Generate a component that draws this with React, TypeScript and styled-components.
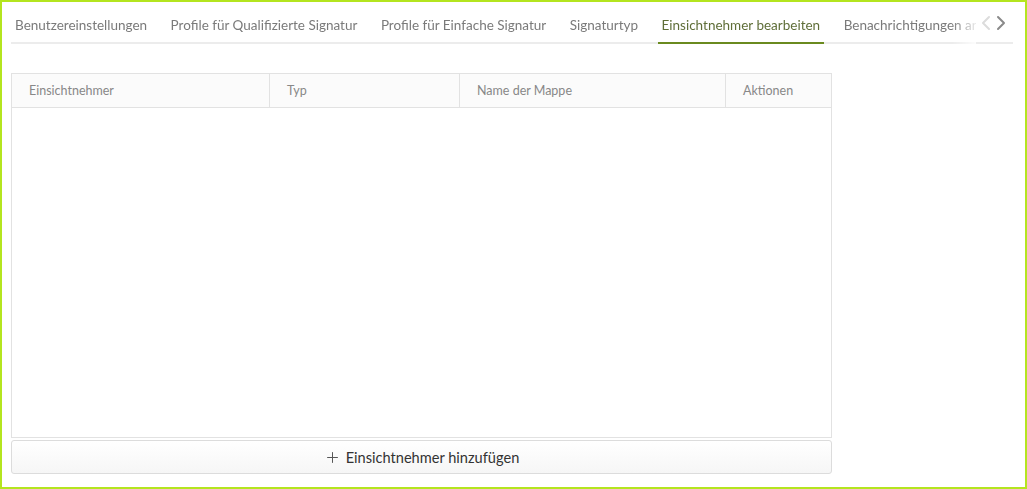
import React, { useState } from 'react';
import styled, { createGlobalStyle } from 'styled-components';
import { ChevronLeft, ChevronRight, Plus } from 'lucide-react';

const GlobalStyle = createGlobalStyle`
  html, body {
    margin: 0;
    padding: 0;
    background: #fff;
  }
  body {
    font-family: Lato, "Noto Sans", sans-serif;
  }
`;

const tabs = [
  'Benutzereinstellungen',
  'Profile für Qualifizierte Signatur',
  'Profile für Einfache Signatur',
  'Signaturtyp',
  'Einsichtnehmer bearbeiten',
  'Benachrichtigungen anpassen',
];

const columns = [
  { label: 'Einsichtnehmer', width: 257 },
  { label: 'Typ', width: 190 },
  { label: 'Name der Mappe', width: 266 },
  { label: 'Aktionen', width: 108 },
];

const App: React.FC = () => {
  const [active, setActive] = useState(4);

  return (
    <>
      <GlobalStyle />
      <Frame>
        <TabBar>
          <TabScroller>
            {tabs.map((t, i) => (
              <Tab key={t} active={i === active} onClick={() => setActive(i)}>
                {t}
              </Tab>
            ))}
          </TabScroller>
          <Arrows>
            <ArrowButton disabled>
              <ChevronLeft size={24} strokeWidth={2} />
            </ArrowButton>
            <ArrowButton>
              <ChevronRight size={24} strokeWidth={2} />
            </ArrowButton>
          </Arrows>
        </TabBar>

        <Content>
          <Table>
            <HeaderRow>
              {columns.map((c) => (
                <HeaderCell key={c.label} width={c.width}>
                  {c.label}
                </HeaderCell>
              ))}
            </HeaderRow>
            <Body />
          </Table>
          <AddButton>
            <Plus size={17} strokeWidth={1.4} />
            Einsichtnehmer hinzufügen
          </AddButton>
        </Content>
      </Frame>
    </>
  );
};

const Frame = styled.div`
  box-sizing: border-box;
  width: 1027px;
  height: 489px;
  border: 2px solid #b4e51f;
  display: flex;
  flex-direction: column;
  overflow: hidden;
`;

const TabBar = styled.div`
  display: flex;
  align-items: stretch;
  margin: 0 12px 0 9px;
`;

const TabScroller = styled.div`
  flex: 1;
  display: flex;
  gap: 15.5px;
  overflow: hidden;
  white-space: nowrap;
  box-shadow: inset 0 -2px 0 #ececec;
  -webkit-mask-image: linear-gradient(to right, #000 calc(100% - 24px), rgba(0, 0, 0, 0.15));
  mask-image: linear-gradient(to right, #000 calc(100% - 24px), rgba(0, 0, 0, 0.15));
`;

const Tab = styled.div<{ active?: boolean }>`
  flex: none;
  padding: 14px 4px 8px;
  line-height: 18px;
  font-size: 13.5px;
  color: ${(p) => (p.active ? '#5f6e38' : '#7a7a7a')};
  border-bottom: 2px solid ${(p) => (p.active ? '#6a8a1f' : 'transparent')};
  cursor: pointer;
`;

const Arrows = styled.div`
  display: flex;
  align-items: center;
  padding: 1px 5px 0 2px;
  border-bottom: 2px solid #ececec;
`;

const ArrowButton = styled.button`
  border: 0;
  background: none;
  padding: 0;
  width: 15px;
  display: flex;
  justify-content: center;
  overflow: visible;
  color: #8a8a8a;
  cursor: pointer;
  svg {
    flex: none;
  }
  &:disabled {
    color: #dcdcdc;
    cursor: default;
  }
`;

const Content = styled.div`
  padding: 29px 0 0 9px;
  width: 821px;
  display: flex;
  flex-direction: column;
  gap: 2px;
`;

const Table = styled.div`
  border: 1px solid #e2e2e2;
  display: flex;
  flex-direction: column;
`;

const HeaderRow = styled.div`
  display: flex;
  background: #fbfbfb;
  border-bottom: 1px solid #e2e2e2;
  height: 33px;
`;

const HeaderCell = styled.div<{ width: number }>`
  box-sizing: border-box;
  width: ${(p) => p.width}px;
  padding: 0 17px;
  display: flex;
  align-items: center;
  font-size: 12.5px;
  color: #888;
  border-left: 1px solid #e2e2e2;
  &:first-child {
    border-left: 0;
  }
  &:last-child {
    flex: 1;
  }
`;

const Body = styled.div`
  height: 329px;
  background: #fff;
`;

const AddButton = styled.button`
  box-sizing: border-box;
  height: 34px;
  width: 100%;
  border: 1px solid #dcdcdc;
  border-radius: 3px;
  background: linear-gradient(#ffffff, #f6f6f6);
  display: flex;
  align-items: center;
  justify-content: center;
  gap: 5px;
  font-family: Lato, "Noto Sans", sans-serif;
  font-size: 14.6px;
  color: #333;
  cursor: pointer;
  svg {
    color: #555;
  }
`;

export default App;
